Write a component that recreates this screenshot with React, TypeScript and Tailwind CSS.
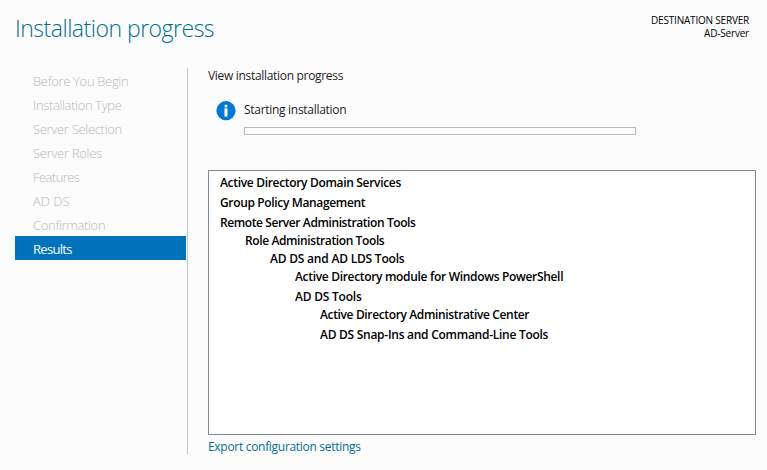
const steps = [
  { label: 'Before You Begin', tracking: 'tracking-[-0.33px]' },
  { label: 'Installation Type', tracking: 'tracking-[-0.36px]' },
  { label: 'Server Selection', tracking: 'tracking-[-0.31px]' },
  { label: 'Server Roles', tracking: 'tracking-[-0.29px]' },
  { label: 'Features', tracking: 'tracking-[-0.57px]' },
  { label: 'AD DS', tracking: 'tracking-[0px]' },
  { label: 'Confirmation', tracking: 'tracking-[-0.33px]' },
  { label: 'Results', tracking: 'tracking-[-0.7px]' },
];

const features = [
  { label: 'Active Directory Domain Services', style: 'h-5 tracking-[-0.32px]' },
  { label: 'Group Policy Management', style: 'h-5 tracking-[-0.35px]' },
  { label: 'Remote Server Administration Tools', style: 'h-[18px] tracking-[-0.4px]' },
  { label: 'Role Administration Tools', style: 'h-[18px] pl-[25px] tracking-[-0.39px]' },
  { label: 'AD DS and AD LDS Tools', style: 'h-[18px] pl-[50px] tracking-[-0.21px]' },
  { label: 'Active Directory module for Windows PowerShell', style: 'h-5 pl-[75px] tracking-[-0.32px]' },
  { label: 'AD DS Tools', style: 'h-[18px] pl-[75px] tracking-[-0.22px]' },
  { label: 'Active Directory Administrative Center', style: 'h-5 pl-[100px] tracking-[-0.36px]' },
  { label: 'AD DS Snap-Ins and Command-Line Tools', style: 'h-5 pl-[100px] tracking-[-0.27px]' },
];

export default function App() {
  return (
    <div className="flex h-[470px] w-[767px] flex-col overflow-hidden bg-[#fcfcfc] font-['Open_Sans',sans-serif] text-xs whitespace-nowrap text-[#1e1e1e]">
      <header className="flex h-[68px] shrink-0 justify-between pr-[18px] pl-[15px]">
        <h1 className="pt-3 text-[23px] leading-8 font-light tracking-[-0.5px] text-[#00708f]">Installation progress</h1>
        <div className="pt-[14px] text-right text-[10px] leading-[12px] text-black">
          <div className="tracking-[-0.2px]">DESTINATION SERVER</div>
          <div className="pt-px tracking-[-0.2px]">AD-Server</div>
        </div>
      </header>
      <div className="flex">
        <nav className="ml-[15px] h-[386px] w-[173px] shrink-0 border-r border-[#c6c6c6] pr-px">
          {steps.map((step, index) => (
            <div
              key={step.label}
              className={`h-6 pl-[18px] text-[13px] leading-[26px] ${step.tracking} ${
                index === steps.length - 1 ? 'bg-[#0072bc] text-white' : 'font-light text-[#b8b8b8]'
              }`}
            >
              {step.label}
            </div>
          ))}
        </nav>
        <main className="ml-5 w-[548px]">
          <p className="h-[33px] leading-[15px] tracking-[-0.31px]">View installation progress</p>
          <div className="flex h-[69px] pl-[8px]">
            <svg className="mr-[8px] h-5 w-5" viewBox="0 0 20 20">
              <circle cx="10" cy="9.7" r="9.6" fill="#0078d7" />
              <circle cx="10" cy="5" r="1.5" fill="#fff" />
              <path d="M8.5 7.4h3v8.2h-3z" fill="#fff" />
            </svg>
            <div>
              <p className="leading-[17px] tracking-[-0.29px]">Starting installation</p>
              <div className="mt-[9px] h-2 w-[392px] border border-[#bcbcbc] bg-white" />
            </div>
          </div>
          <ul className="h-[265px] w-[548px] border border-[#828790] bg-white pt-[3px] pl-[11px] leading-[17px] font-semibold text-black">
            {features.map((feature) => (
              <li key={feature.label} className={feature.style}>
                {feature.label}
              </li>
            ))}
          </ul>
          <a className="block leading-[23px] tracking-[-0.3px] text-[#00708f]">Export configuration settings</a>
        </main>
      </div>
    </div>
  );
}
